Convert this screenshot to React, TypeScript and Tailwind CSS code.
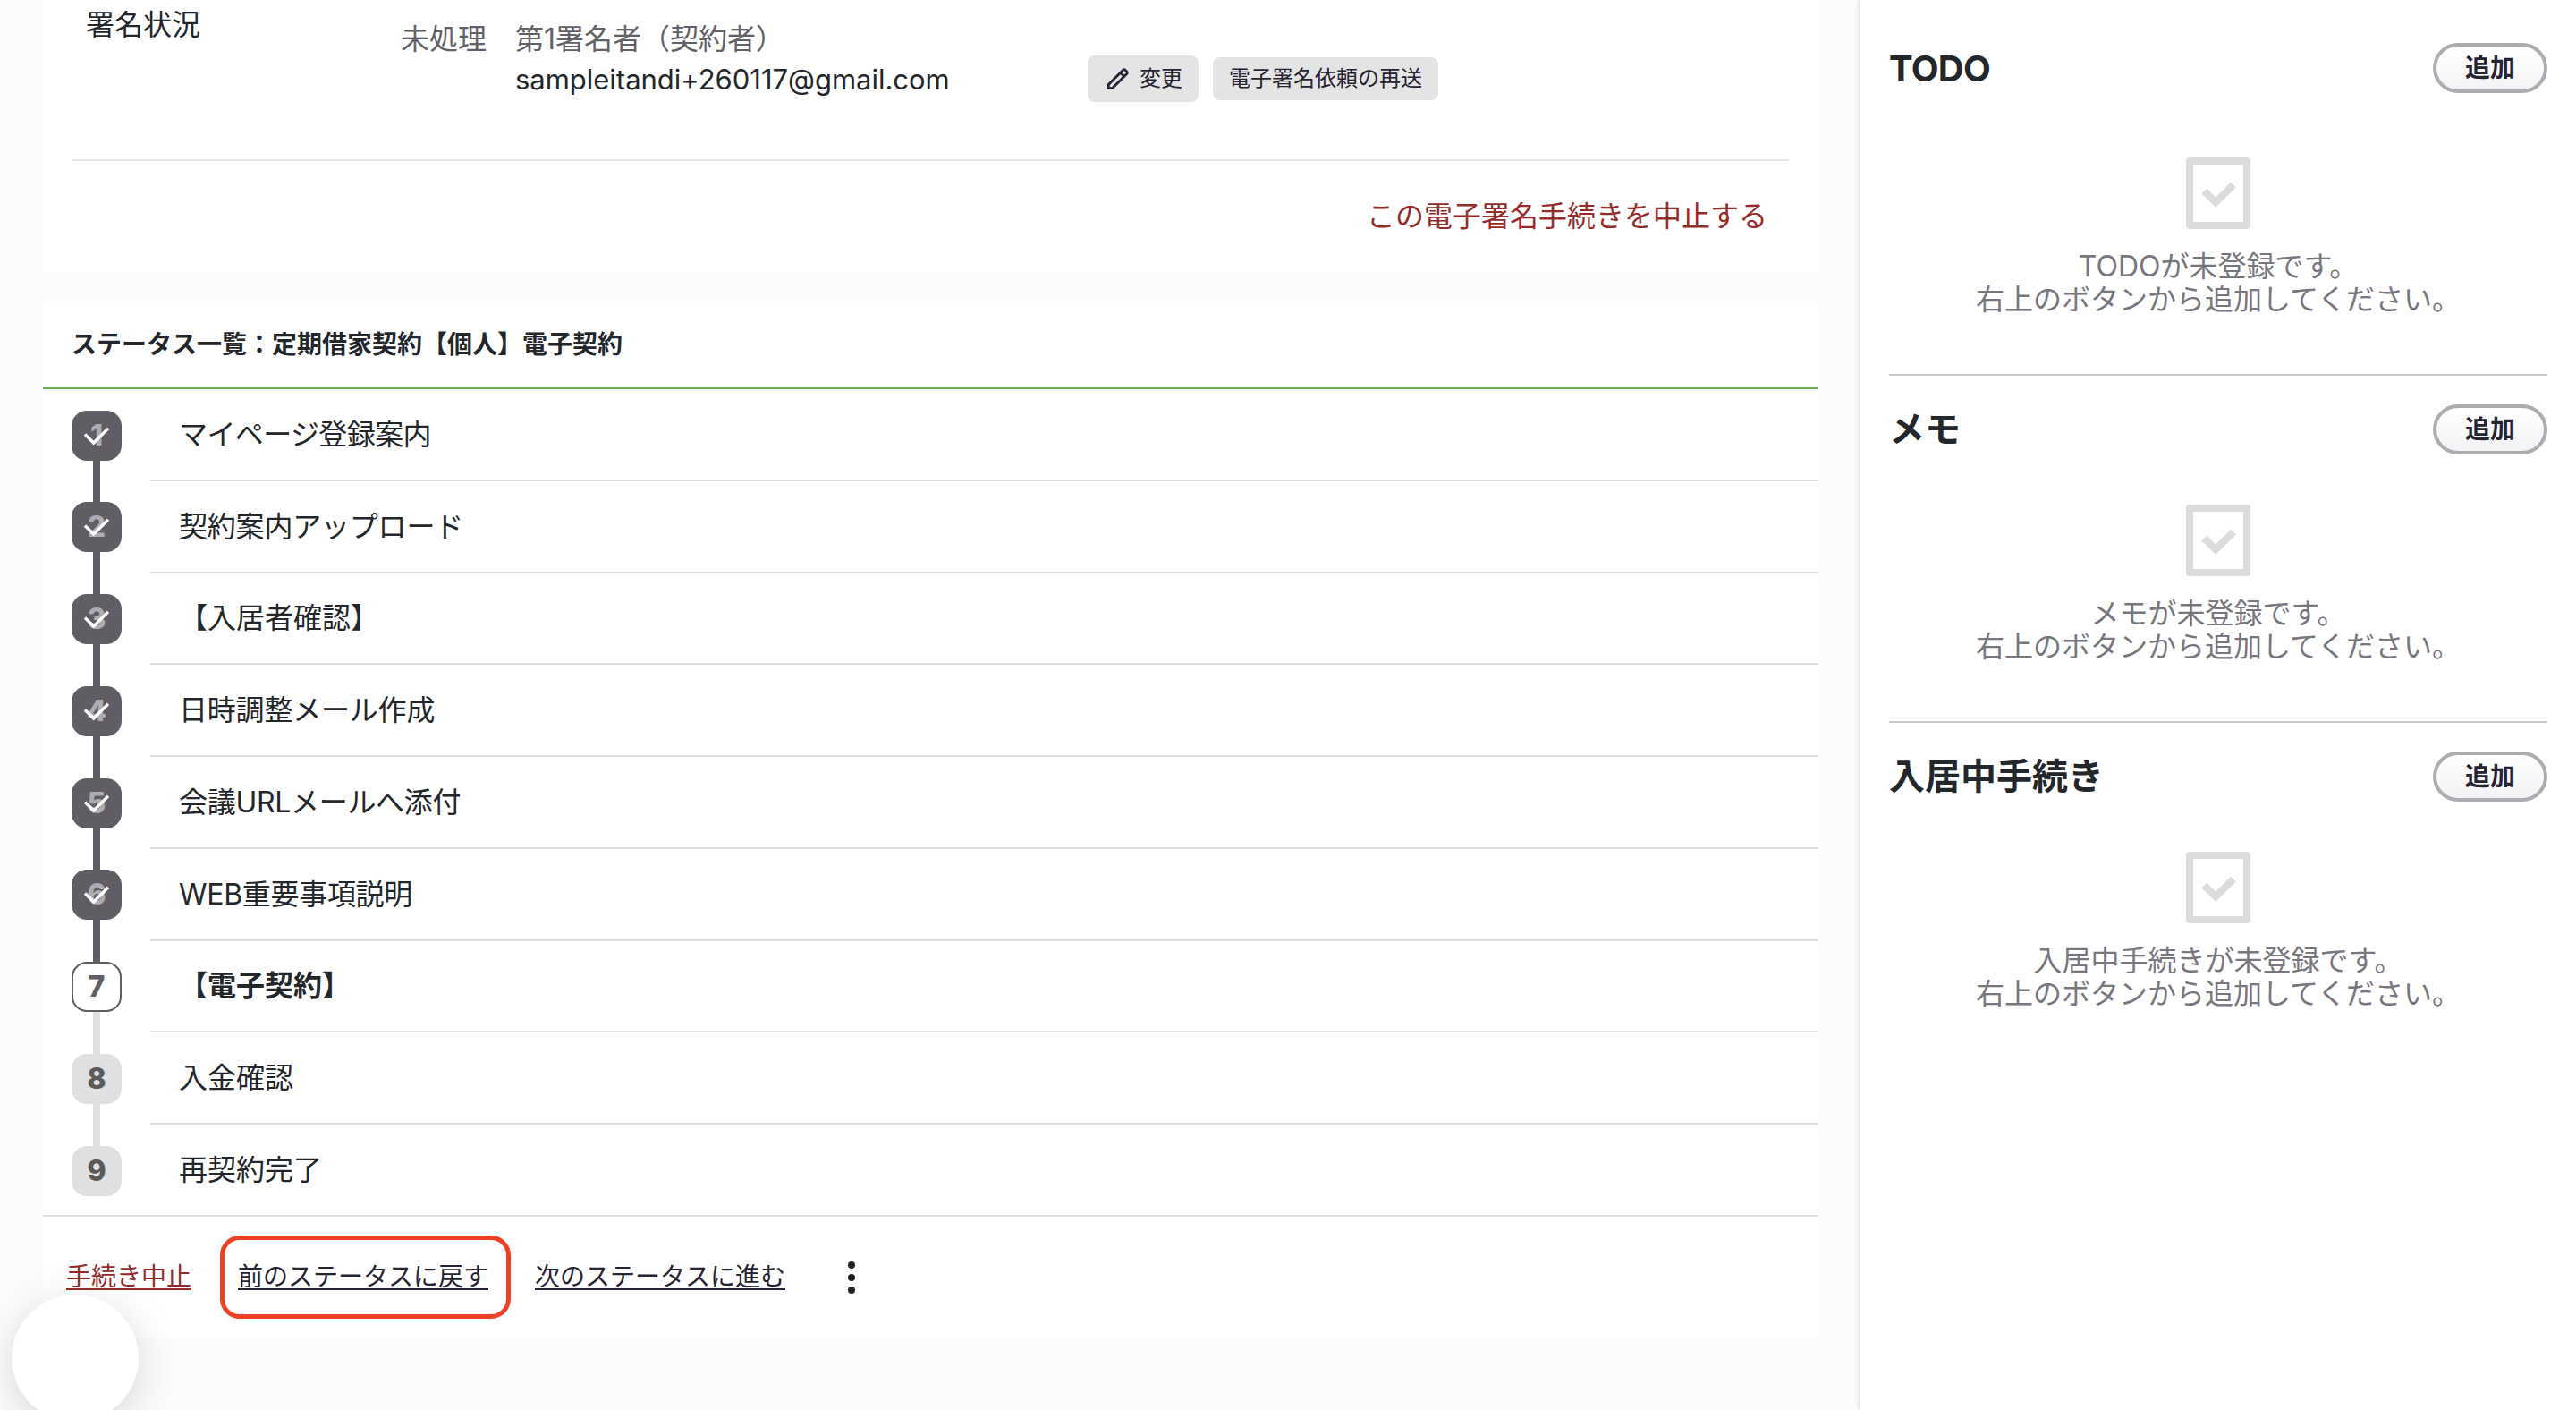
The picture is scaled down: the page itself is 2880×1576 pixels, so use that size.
import React from "react";
import clsx from "clsx";

const steps = [
  { label: "マイページ登録案内", status: "done", tracking: "tracking-[-0.6px]" },
  { label: "契約案内アップロード", status: "done", tracking: "tracking-[-0.2px]" },
  { label: "【入居者確認】", status: "done" },
  { label: "日時調整メール作成", status: "done", tracking: "tracking-[-0.2px]" },
  { label: "会議URLメールへ添付", status: "done", tracking: "tracking-[-0.3px]" },
  { label: "WEB重要事項説明", status: "done", tracking: "tracking-[-0.3px]" },
  { label: "【電子契約】", status: "current" },
  { label: "入金確認", status: "todo" },
  { label: "再契約完了", status: "todo" },
];

const panels = ["TODO", "メモ", "入居中手続き"];

function PencilIcon() {
  return (
    <svg width="24" height="24" viewBox="0 0 24 24" fill="none">
      <path
        d="M1.4 22.6v-4.2L17.6 2.2a1.6 1.6 0 0 1 2.3 0l1.9 1.9a1.6 1.6 0 0 1 0 2.3L5.6 22.6zM14.6 5.2l4.2 4.2"
        stroke="currentColor"
        strokeWidth="2.8"
      />
    </svg>
  );
}

function SignatureCard() {
  return (
    <section className="h-[305px] bg-white px-8">
      <div className="flex h-[180px] items-start border-b-2 border-[#e5e5e5] pl-4">
        <div className="mt-3 w-[352px] leading-8">署名状況</div>
        <div className="mt-7 w-32 leading-8 text-[#636168]">未処理</div>
        <div className="mt-7 w-[640px]">
          <div className="leading-8 text-[#636168]">第1署名者（契約者）</div>
          <div className="mt-[13px] text-[31px] leading-8 tracking-[-0.02px]">
            sampleitandi+260117@gmail.com
          </div>
        </div>
        <div className="mt-[62px] flex items-center gap-4 text-2xl text-[#262333]">
          <button className="flex h-[52px] w-31 items-center justify-center gap-3 rounded-lg bg-[#e4e4e4] pl-1">
            <PencilIcon />
            変更
          </button>
          <button className="h-12 w-63 rounded-lg bg-[#e4e4e4] pb-px">
            電子署名依頼の再送
          </button>
        </div>
      </div>
      <div className="flex justify-end pt-[46px] pr-6">
        <a className="leading-8 text-[#962b2b]">この電子署名手続きを中止する</a>
      </div>
    </section>
  );
}

function StepBadge({ number, status }: { number: number; status: string }) {
  return (
    <div
      className={clsx(
        "relative flex size-14 shrink-0 items-center justify-center rounded-[17px] text-[32px] leading-none font-extrabold",
        status === "done" && "bg-[#605d64] text-[#adacb0]",
        status === "current" &&
          "border-2 border-[#605d64] bg-white text-[#605d64]",
        status === "todo" && "bg-[#e0e0e2] text-[#5a5a5a]"
      )}
    >
      {number}
      {status === "done" && (
        <svg
          className="absolute inset-0"
          width="56"
          height="56"
          viewBox="0 0 56 56"
          fill="none"
        >
          <path d="M15 26.5l9.7 9.5L41 19.8" stroke="#fff" strokeWidth="3.4" />
        </svg>
      )}
    </div>
  );
}

function StepRow({ index }: { index: number }) {
  const { label, status, tracking } = steps[index];
  const isLast = index === steps.length - 1;

  return (
    <li className="flex h-[102.75px] pl-8">
      <div className="flex w-14 flex-col items-center">
        <div
          className={clsx(
            "h-[23.6px] w-2",
            index > 0 && (index <= 6 ? "bg-[#605d64]" : "bg-[#e0e0e2]")
          )}
        />
        <StepBadge number={index + 1} status={status} />
        {!isLast && (
          <div
            className={clsx(
              "w-2 grow",
              status === "done" ? "bg-[#605d64]" : "bg-[#e0e0e2]"
            )}
          />
        )}
      </div>
      <div
        className={clsx(
          "ml-8 flex grow items-center border-b-2 pt-px pl-8",
          isLast ? "border-transparent" : "border-[#dedede]",
          status === "current" && "font-bold",
          tracking
        )}
      >
        {label}
      </div>
    </li>
  );
}

function StatusCard() {
  return (
    <section className="mt-8 h-[1159px] bg-white">
      <h2 className="flex h-[98px] items-center border-b-2 border-[#6fab52] px-8 text-[28px] font-bold">
        ステータス一覧：定期借家契約【個人】電子契約
      </h2>
      <ol className="h-[925px] border-b-2 border-[#dedede]">
        {steps.map((step, index) => (
          <StepRow key={step.label} index={index} />
        ))}
      </ol>
      <div className="flex items-center pt-[21px] pl-[26px] text-[28px] text-[#262333]">
        <a className="mb-px border-b-2 pt-[2px] leading-[26px] text-[#962b2b]">
          手続き中止
        </a>
        <div className="ml-8 flex h-[93px] w-[325px] items-center rounded-[22px] border-5 border-[#ec4126] pl-[15px]">
          <a className="mb-px border-b-2 border-[#262333] pt-[2px] leading-[26px]">
            前のステータスに戻す
          </a>
        </div>
        <a className="mb-px ml-[27px] border-b-2 border-[#262333] pt-[2px] leading-[26px]">
          次のステータスに進む
        </a>
        <button className="ml-[70px] flex flex-col gap-[6px]">
          <span className="size-2 rounded-full bg-[#222]" />
          <span className="size-2 rounded-full bg-[#222]" />
          <span className="size-2 rounded-full bg-[#222]" />
        </button>
      </div>
    </section>
  );
}

function EmptyIcon() {
  return (
    <div className="flex h-20 w-18 items-center justify-center rounded-[4px] border-8 border-[#dcdcde]">
      <svg width="40" height="32" viewBox="0 0 40 32" fill="#dcdcde">
        <path d="M1.4 16.5l5.9-5.9 9.9 9.8L34 3.7l5.9 5.7-22.7 22.3z" />
      </svg>
    </div>
  );
}

function Panel({ title, first }: { title: string; first: boolean }) {
  return (
    <section
      className={clsx(
        "border-b-2 border-[#c8c8c8] last:border-b-0",
        first ? "h-[420px] pt-12" : "h-[388px] pt-8"
      )}
    >
      <div className="flex h-14 items-center justify-between">
        <h2
          className={clsx(
            "text-[40px] leading-none font-bold",
            first && "pt-[2px] tracking-[-0.7px]"
          )}
        >
          {title}
        </h2>
        <button className="h-14 w-32 rounded-full border-4 border-[#adacb0] bg-linear-to-b from-white to-[#f3f3f6] text-[28px] leading-none font-bold text-[#262333]">
          追加
        </button>
      </div>
      <div
        className={clsx(
          "flex flex-col items-center text-[#78767e]",
          first ? "pt-18" : "pt-14"
        )}
      >
        <EmptyIcon />
        <p className="mt-6 text-center leading-[36.5px]">
          {title}が未登録です。
          <br />
          右上のボタンから追加してください。
        </p>
      </div>
    </section>
  );
}

export default function App() {
  return (
    <div className="relative flex h-[1576px] w-[2880px] overflow-hidden bg-[#fcfcfc] font-['Inter','Noto_Sans_CJK_JP',sans-serif] text-[32px] text-[#23272b] [font-optical-sizing:none]">
      <main className="w-[2080px] pr-12 pl-12">
        <SignatureCard />
        <StatusCard />
      </main>
      <aside className="w-[800px] bg-white px-8 shadow-[0_0_6px_rgba(0,0,0,0.25)]">
        {panels.map((title, index) => (
          <Panel key={title} title={title} first={index === 0} />
        ))}
      </aside>
      <div className="absolute top-[1447px] left-[13px] size-[142px] rounded-full bg-white shadow-[0_10px_48px_rgba(0,0,0,0.15)]" />
    </div>
  );
}
